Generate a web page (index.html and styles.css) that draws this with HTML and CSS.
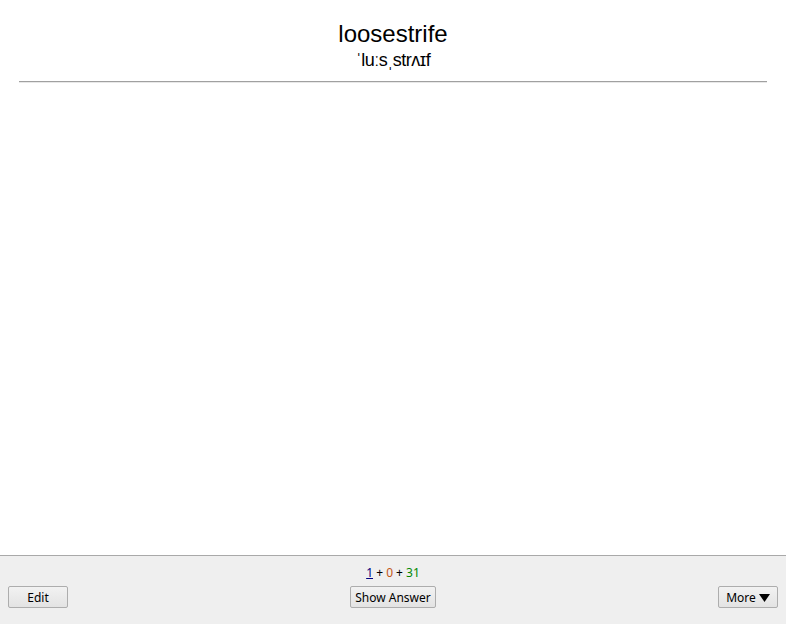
FILE: index.html
```html
<!DOCTYPE html>
<html>
<head>
<meta charset="utf-8">
<link rel="stylesheet" href="styles.css">
</head>
<body>
<main class="card">
  <div class="word">loosestrife</div>
  <div class="ipa">ˈluːsˌstrʌɪf</div>
  <hr class="rule">
</main>
<footer class="bar">
  <div class="counts"><span class="new">1</span> + <span class="learn">0</span> + <span class="review">31</span></div>
  <div class="buttons">
    <button class="btn btn-side">Edit</button>
    <button class="btn btn-answer">Show Answer</button>
    <button class="btn btn-side">More <svg class="arrow" width="11" height="8" viewBox="0 0 11 8"><polygon points="0,0 11,0 5.5,8" fill="#000"/></svg></button>
  </div>
</footer>
</body>
</html>
```
FILE: styles.css
```css
html, body {
  margin: 0;
  padding: 0;
  height: 100%;
}
body {
  display: flex;
  flex-direction: column;
  background: #ffffff;
  font-family: "Liberation Sans", Arial, sans-serif;
  color: #000;
}
.card {
  flex: 1;
  padding: 20px 19px 0;
  text-align: center;
}
.word {
  font-size: 24px;
  line-height: 28px;
  color: #000;
}
.ipa {
  font-family: "Liberation Sans", "Noto Sans", sans-serif;
  font-size: 18px;
  line-height: 22px;
  margin-top: 1px;
  letter-spacing: -0.5px;
}
.rule {
  margin: 10px 0 0;
  border: none;
  border-top: 1px solid #a0a0a0;
  border-bottom: 1px solid #e8e8e8;
  height: 0;
}
.bar {
  height: 68px;
  border-top: 1px solid #a9a9a9;
  background: #efefef;
  box-sizing: content-box;
  padding: 0 8px;
  font-family: "Noto Sans", "Open Sans", sans-serif;
}
.counts {
  text-align: center;
  font-size: 12px;
  line-height: 16px;
  margin-top: 9px;
  color: #000;
}
.new { color: #000080; text-decoration: underline; }
.learn { color: #c35617; }
.review { color: #008800; }
.buttons {
  display: flex;
  justify-content: space-between;
  align-items: center;
  margin-top: 5px;
}
.btn {
  height: 22px;
  padding: 0;
  display: inline-flex;
  align-items: center;
  justify-content: center;
  gap: 3px;
  font-family: "Noto Sans", "Open Sans", sans-serif;
  font-size: 12px;
  color: #000;
  border: 1px solid #adadad;
  border-radius: 2px;
  background: linear-gradient(#f2f2f2, #e3e3e3);
}
.arrow {
  display: block;
  margin-top: 1px;
}
.btn-side { width: 60px; }
.btn-answer { width: 86px; }
```
